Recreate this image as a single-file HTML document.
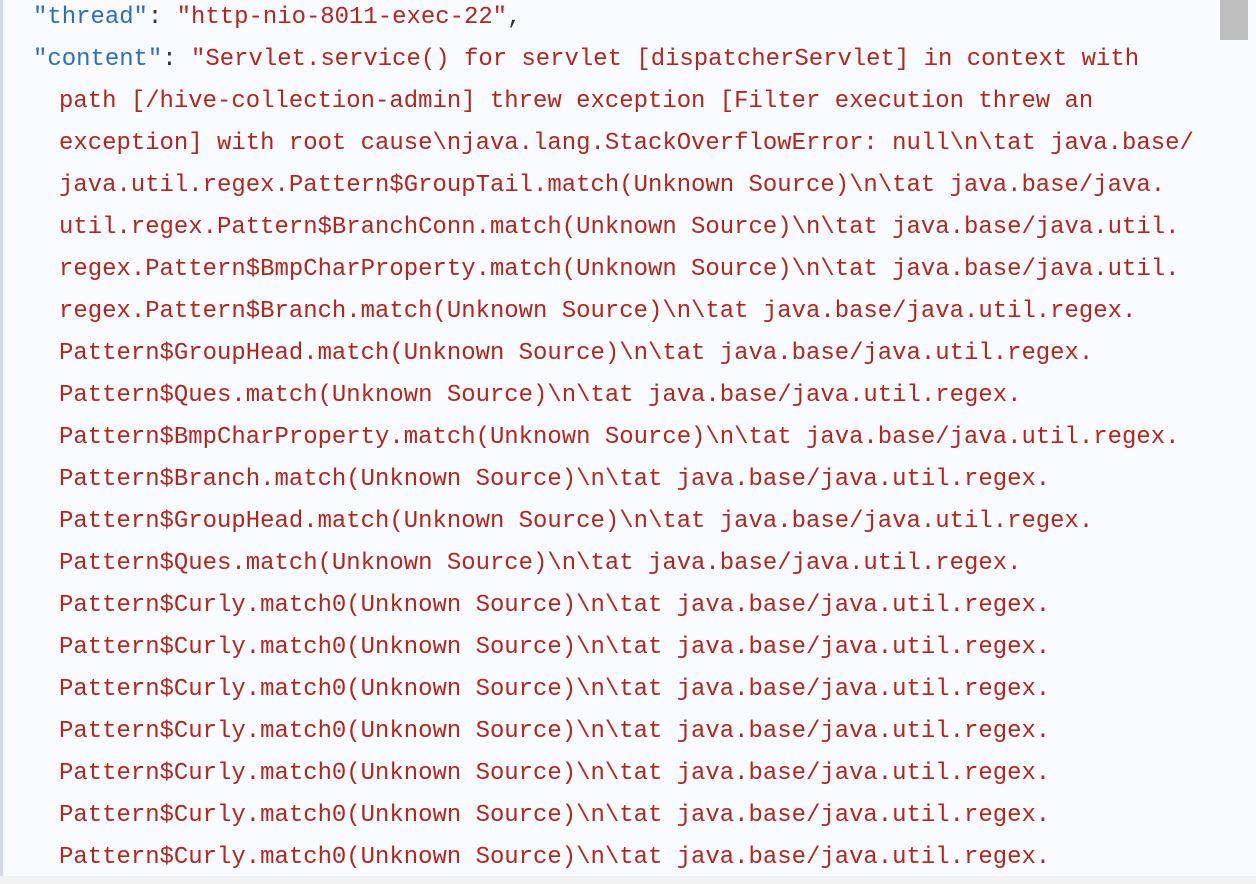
<!DOCTYPE html>
<html><head><meta charset="utf-8"><style>
html,body{margin:0;padding:0;width:1256px;height:884px;overflow:hidden;background:#fafbfe;}
.b{position:absolute;left:0;top:0;width:3px;height:876px;background:#d3d9e8;}
.sb{position:absolute;left:1220px;top:0;width:28px;height:40px;background:#bfbfbf;}
.bot{position:absolute;left:0;top:876px;width:1256px;height:8px;background:#f2f2f2;}
.l{position:absolute;white-space:pre;font-family:"Liberation Mono",monospace;font-size:23.95px;line-height:42px;color:#b3261e;}
.k{color:#2b6dc4}.p{color:#333}
</style></head><body>
<div class="b"></div><div class="sb"></div><div class="bot"></div>
<div class="l" style="left:33px;top:-3px"><span class="k">"thread"</span><span class="p">: </span>"http-nio-8011-exec-22"<span class="p">,</span></div>
<div class="l" style="left:33px;top:39px"><span class="k">"content"</span><span class="p">: </span>"Servlet.service() for servlet [dispatcherServlet] in context with</div>
<div class="l" style="left:59px;top:81px">path [/hive-collection-admin] threw exception [Filter execution threw an</div>
<div class="l" style="left:59px;top:123px">exception] with root cause\njava.lang.StackOverflowError: null\n\tat java.base/</div>
<div class="l" style="left:59px;top:165px">java.util.regex.Pattern$GroupTail.match(Unknown Source)\n\tat java.base/java.</div>
<div class="l" style="left:59px;top:207px">util.regex.Pattern$BranchConn.match(Unknown Source)\n\tat java.base/java.util.</div>
<div class="l" style="left:59px;top:249px">regex.Pattern$BmpCharProperty.match(Unknown Source)\n\tat java.base/java.util.</div>
<div class="l" style="left:59px;top:291px">regex.Pattern$Branch.match(Unknown Source)\n\tat java.base/java.util.regex.</div>
<div class="l" style="left:59px;top:333px">Pattern$GroupHead.match(Unknown Source)\n\tat java.base/java.util.regex.</div>
<div class="l" style="left:59px;top:375px">Pattern$Ques.match(Unknown Source)\n\tat java.base/java.util.regex.</div>
<div class="l" style="left:59px;top:417px">Pattern$BmpCharProperty.match(Unknown Source)\n\tat java.base/java.util.regex.</div>
<div class="l" style="left:59px;top:459px">Pattern$Branch.match(Unknown Source)\n\tat java.base/java.util.regex.</div>
<div class="l" style="left:59px;top:501px">Pattern$GroupHead.match(Unknown Source)\n\tat java.base/java.util.regex.</div>
<div class="l" style="left:59px;top:543px">Pattern$Ques.match(Unknown Source)\n\tat java.base/java.util.regex.</div>
<div class="l" style="left:59px;top:585px">Pattern$Curly.match0(Unknown Source)\n\tat java.base/java.util.regex.</div>
<div class="l" style="left:59px;top:627px">Pattern$Curly.match0(Unknown Source)\n\tat java.base/java.util.regex.</div>
<div class="l" style="left:59px;top:669px">Pattern$Curly.match0(Unknown Source)\n\tat java.base/java.util.regex.</div>
<div class="l" style="left:59px;top:711px">Pattern$Curly.match0(Unknown Source)\n\tat java.base/java.util.regex.</div>
<div class="l" style="left:59px;top:753px">Pattern$Curly.match0(Unknown Source)\n\tat java.base/java.util.regex.</div>
<div class="l" style="left:59px;top:795px">Pattern$Curly.match0(Unknown Source)\n\tat java.base/java.util.regex.</div>
<div class="l" style="left:59px;top:837px">Pattern$Curly.match0(Unknown Source)\n\tat java.base/java.util.regex.</div>
</body></html>
